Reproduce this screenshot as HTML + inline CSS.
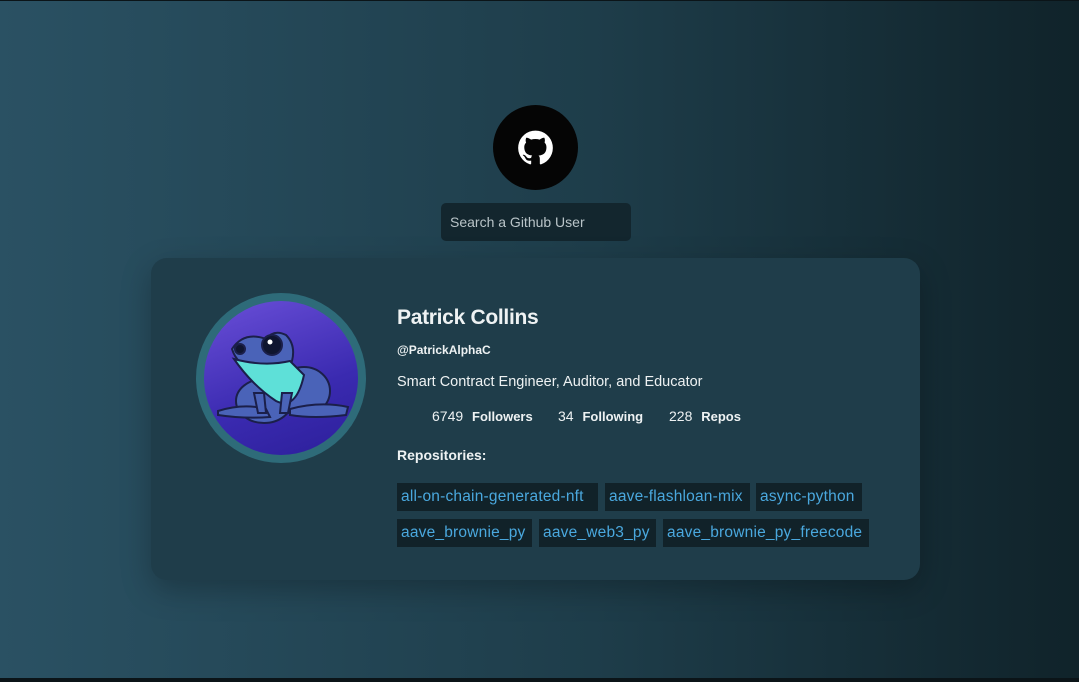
<!DOCTYPE html>
<html><head><style>
body{margin:0;width:1079px;height:682px;overflow:hidden;background:linear-gradient(90deg,#2a5163 0%,#1e3d4a 55%,#10232a 100%);font-family:"Liberation Sans",sans-serif;position:relative}
.gh{position:absolute;left:493px;top:105px;width:85px;height:85px;border-radius:50%;background:#050505}
.search{position:absolute;left:441px;top:203px;width:190px;height:38px;background:#13262e;border-radius:5px;color:#b9c4c8;font-size:14px;line-height:38px;padding-left:9px;box-sizing:border-box}
.card{position:absolute;left:151px;top:258px;width:769px;height:322px;background:#1f3d4a;border-radius:16px;box-shadow:0 10px 30px rgba(0,0,0,.25)}
.av{position:absolute;left:45px;top:35px;width:170px;height:170px;border-radius:50%;background:#2e6b79}
.av .in{position:absolute;left:8px;top:8px;width:154px;height:154px;border-radius:50%;background:linear-gradient(160deg,#6a4fd8,#3a2ab0 60%,#2c1f9a);overflow:hidden}
.t{position:absolute;color:#eef2f3}
.tag{position:absolute;height:28px;line-height:28px;background:#112229;color:#4aa8de;font-size:15.5px;padding:0 4px;box-sizing:border-box;white-space:nowrap;letter-spacing:.2px}
b{font-weight:bold}
</style></head><body>
<div style="position:absolute;left:0;top:0;width:1079px;height:1px;background:#0b1418"></div>
<div class="gh"><svg width="85" height="85" viewBox="-17.5 -17.5 59 59"><path fill="#fff" d="M12 .3a12 12 0 0 0-3.8 23.4c.6.1.8-.3.8-.6v-2c-3.3.7-4-1.6-4-1.6-.6-1.4-1.4-1.8-1.4-1.8-1-.7.1-.7.1-.7 1.2.1 1.8 1.2 1.8 1.2 1 1.8 2.8 1.3 3.5 1 0-.8.4-1.3.7-1.600-2.7-.3-5.5-1.300-5.5-6 0-1.2.5-2.300 1.3-3.1-.2-.4-.6-1.600 0-3.2 0 0 1-.3 3.4 1.2a11.5 11.5 0 0 1 6 0c2.3-1.5 3.3-1.2 3.3-1.2.6 1.6.2 2.8.1 3.2.8.8 1.3 1.9 1.3 3.2 0 4.6-2.8 5.6-5.5 5.9.5.4.9 1 .9 2.2v3.3c0 .3.1.7.8.6A12 12 0 0 0 12 .3"/></svg></div>
<div class="search">Search a Github User</div>
<div class="card">
 <div class="av"><div class="in">
  <svg width="154" height="154" viewBox="0 0 154 154">
   <g stroke="#1b1f4a" stroke-width="2">
   <ellipse cx="60" cy="100" rx="28" ry="22" fill="#4a63b8"/>
   <ellipse cx="100" cy="90" rx="26" ry="24" fill="#4a63b8"/>
   <path d="M28 48 Q40 30 62 38 Q70 28 82 34 Q92 44 88 60 Q80 72 62 72 Q34 68 28 48Z" fill="#4a63b8"/>
   <path d="M30 58 Q60 66 86 60 L100 74 Q92 110 72 100 Q48 84 30 58Z" fill="#5ee0d8"/>
   <path d="M14 110 Q40 102 62 108 L66 116 Q40 118 14 114Z" fill="#4a63b8"/>
   <path d="M86 108 Q116 100 144 106 L142 114 Q110 118 86 114Z" fill="#4a63b8"/>
   <path d="M50 92 L54 112 L62 112 L60 92Z" fill="#4a63b8"/>
   <path d="M78 92 L76 112 L84 112 L88 92Z" fill="#4a63b8"/>
   <circle cx="68" cy="44" r="10" fill="#0f1530"/>
   <circle cx="36" cy="48" r="5" fill="#0f1530"/>
   </g>
   <circle cx="66" cy="41" r="2.5" fill="#fff"/>
  </svg>
 </div></div>
 <div class="t" style="left:246px;top:48px;font-size:21px;font-weight:bold;letter-spacing:-.3px">Patrick Collins</div>
 <div class="t" style="left:246px;top:85px;font-size:12px;font-weight:bold">@PatrickAlphaC</div>
 <div class="t" style="left:246px;top:116px;font-size:14.5px">Smart Contract Engineer, Auditor, and Educator</div>
 <div class="t" style="left:281px;top:150px;font-size:14px">6749 <b style="font-size:13px;margin-left:5px">Followers</b></div>
 <div class="t" style="left:407px;top:150px;font-size:14px">34 <b style="font-size:13px;margin-left:5px">Following</b></div>
 <div class="t" style="left:518px;top:150px;font-size:14px">228 <b style="font-size:13px;margin-left:5px">Repos</b></div>
 <div class="t" style="left:246px;top:189px;font-size:14px;font-weight:bold">Repositories:</div>
 <div class="tag" style="left:246px;top:225px;width:201px">all-on-chain-generated-nft</div>
 <div class="tag" style="left:454px;top:225px;width:145px">aave-flashloan-mix</div>
 <div class="tag" style="left:605px;top:225px;width:106px">async-python</div>
 <div class="tag" style="left:246px;top:261px;width:135px">aave_brownie_py</div>
 <div class="tag" style="left:388px;top:261px;width:117px">aave_web3_py</div>
 <div class="tag" style="left:512px;top:261px;width:206px">aave_brownie_py_freecode</div>
</div>
<div style="position:absolute;left:0;top:678px;width:1079px;height:4px;background:#0b1418"></div>
</body></html>
